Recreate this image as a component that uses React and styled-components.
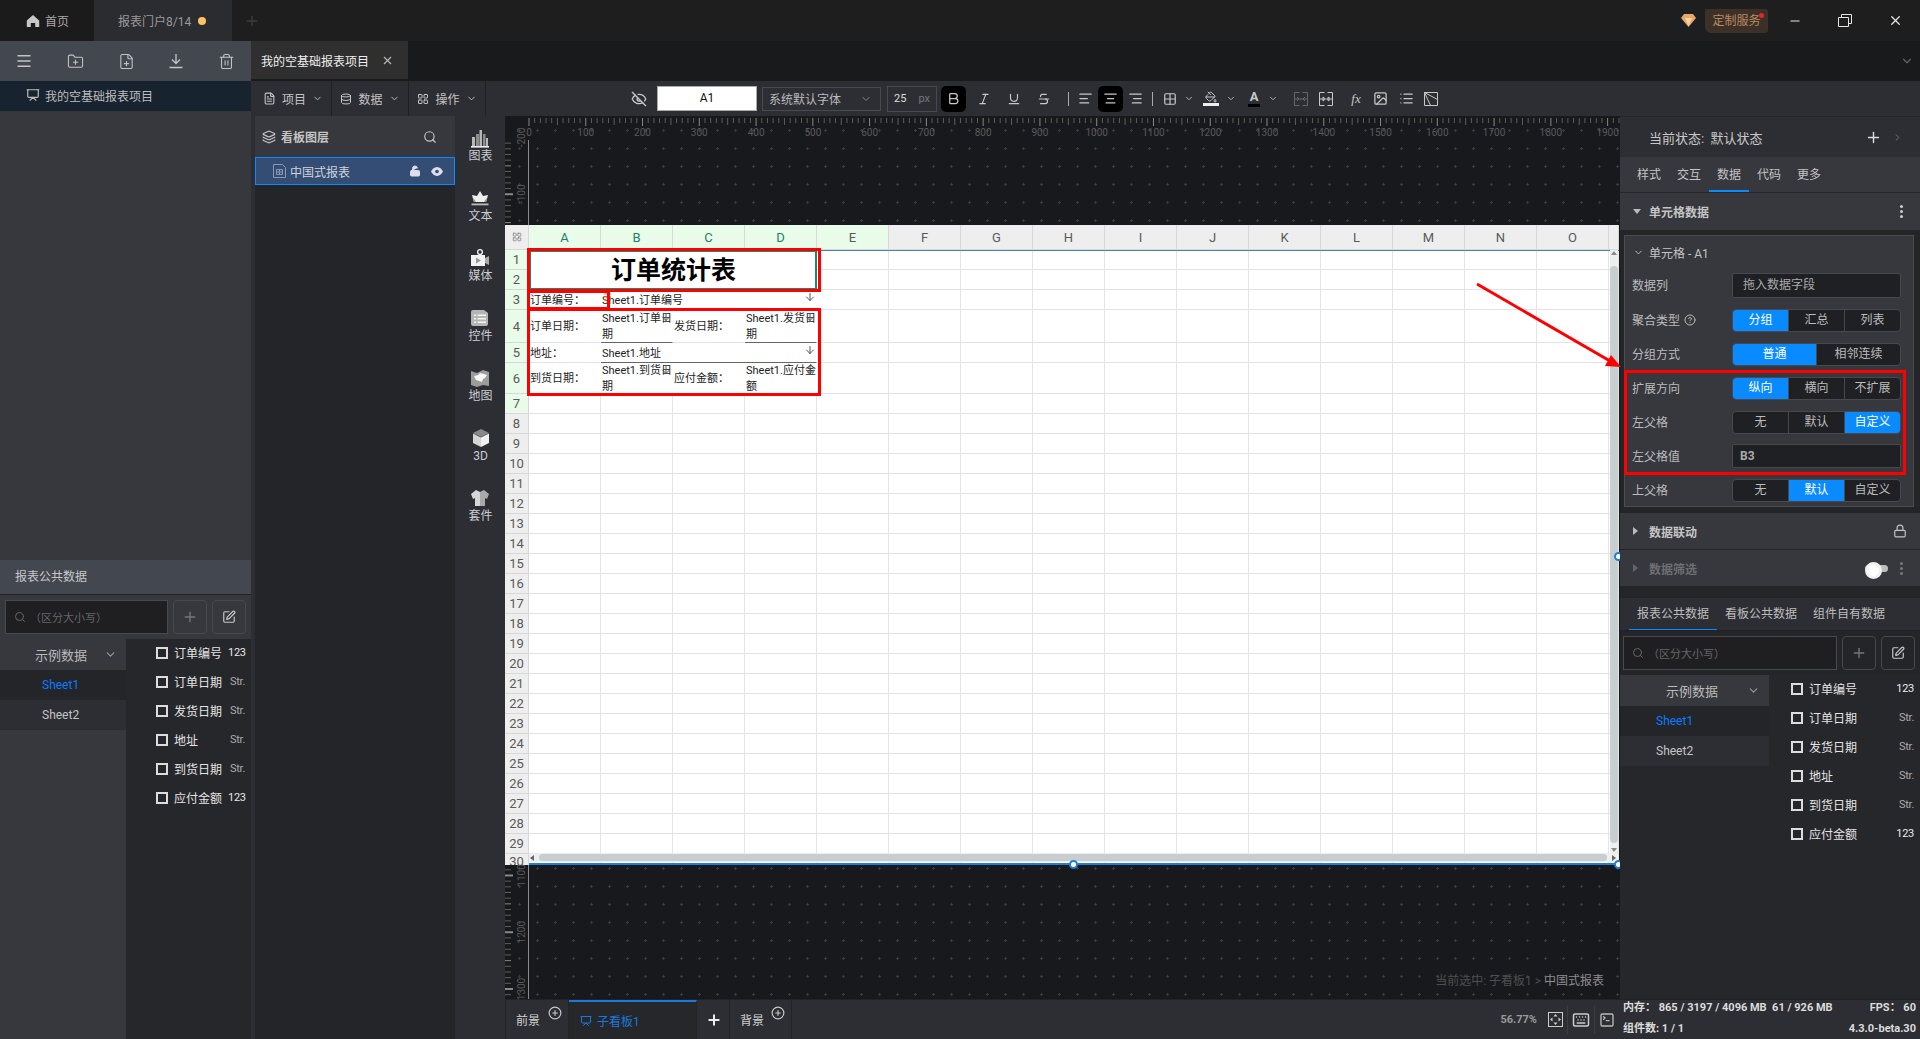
import React from 'react';
import styled, { createGlobalStyle } from 'styled-components';
import {
  Menu, FolderPlus, FilePlus, Trash2, Presentation, FileText, Database, LayoutGrid, ChevronDown,
  ChevronRight, EyeOff, Bold, Italic, Underline, Strikethrough, AlignLeft, AlignCenter, AlignRight,
  Grid2x2, PaintBucket, Search, Plus, SquarePen, X, Layers, LockOpen, Lock, CircleHelp, Minus,
  Keyboard, SquareTerminal, CirclePlus, ArrowDown, List, Image,
} from 'lucide-react';

const FONT = 'Roboto, "Noto Sans CJK SC", sans-serif';
const BLUE = '#0a8aff';

const Global = createGlobalStyle`
  html, body { margin: 0; padding: 0; background: #1e1e1e; overflow: hidden; }
  * { box-sizing: border-box; }
  body { font-family: ${FONT}; font-size: 12px; color: #c8c8c8; }
`;

const Page = styled.div`
  position: relative;
  width: 1920px;
  height: 1039px;
  display: flex;
  flex-direction: column;
  overflow: hidden;
`;

/* title bar */
const TitleBar = styled.div`
  height: 41px;
  flex: none;
  display: flex;
  align-items: stretch;
  background: #1e1e1e;
`;
const HomeTab = styled.div`
  width: 94px;
  display: flex;
  align-items: center;
  gap: 5px;
  padding-left: 26px;
  background: #1b1b1b;
  color: #a8a8a8;
`;
const PortalTab = styled.div`
  width: 138px;
  display: flex;
  align-items: center;
  padding-left: 24px;
  gap: 7px;
  background: #2b2c30;
  color: #9a9a9a;
`;
const Dot = styled.i`
  width: 8px;
  height: 8px;
  border-radius: 50%;
  background: #ffc261;
`;
const AddTab = styled.div`
  width: 40px;
  display: flex;
  align-items: center;
  justify-content: center;
  color: #3d3d3d;
`;
const TitleRight = styled.div`
  margin-left: auto;
  display: flex;
  align-items: center;
`;
const Gem = styled.div`
  width: 33px;
  height: 24px;
  display: flex;
  align-items: center;
  justify-content: center;
  background: #1c1e22;
`;
const Service = styled.div`
  position: relative;
  width: 63px;
  height: 24px;
  margin-right: 2px;
  line-height: 24px;
  text-align: center;
  background: #3d3027;
  border-radius: 0 3px 3px 6px;
  color: #b98a63;
  &::after {
    content: '';
    position: absolute;
    right: 4px;
    top: 4px;
    width: 5px;
    height: 5px;
    border-radius: 50%;
    background: #e0262e;
  }
`;
const WinBtn = styled.div`
  width: 50px;
  display: flex;
  align-items: center;
  justify-content: center;
  color: #e6e6e6;
`;
const RestoreIcon = styled.svg`
  width: 14px;
  height: 13px;
`;

const Body = styled.div`
  flex: 1;
  display: flex;
  min-height: 0;
`;

/* left sidebar */
const Sidebar = styled.aside`
  width: 251px;
  flex: none;
  display: flex;
  flex-direction: column;
  background: #36383d;
`;
const SideHead = styled.div`
  height: 40px;
  flex: none;
  display: flex;
  align-items: center;
  justify-content: space-between;
  padding: 0 16px 0 15px;
  background: #434750;
  color: #c4c4c4;
`;
const ProjectRow = styled.div`
  height: 30px;
  flex: none;
  display: flex;
  align-items: center;
  gap: 5px;
  padding: 0 0 2px 26px;
  background: #17232f;
  color: #bdbdbd;
`;
const SideSpace = styled.div`
  height: 449px;
  flex: none;
`;
const SideTitle = styled.div`
  height: 35px;
  flex: none;
  line-height: 35px;
  padding-left: 15px;
  background: #434750;
  color: #c8c8c8;
  border-bottom: 1px solid #222;
`;

/* data browser, both the left and the right panel use it */
const SearchRow = styled.div`
  height: 44px;
  flex: none;
  display: flex;
  gap: 5px;
  padding: 5px 5px 5px ${p => p.$pad}px;
`;
const SearchBox = styled.div`
  flex: 1;
  display: flex;
  align-items: center;
  gap: 4px;
  padding-left: 8px;
  background: #1f1f21;
  border: 1px solid #4a4a4a;
  font-size: 11px;
  color: #666;
`;
const SquareBtn = styled.div`
  width: 34px;
  display: flex;
  align-items: center;
  justify-content: center;
  border: 1px solid #47494e;
  border-radius: 4px;
  color: ${p => (p.$bright ? '#c8c8c8' : '#777')};
`;
const Browser = styled.div`
  flex: 1;
  display: flex;
  min-height: 0;
`;
const SheetCol = styled.div`
  width: ${p => p.$w}px;
  flex: none;
  background: ${p => p.$bg};
`;
const GroupRow = styled.div`
  height: 31px;
  display: flex;
  align-items: center;
  justify-content: space-between;
  padding: 0 9px 0 ${p => p.$pad}px;
  background: #36383d;
  font-size: 13px;
  color: #bbb;
`;
const SheetRow = styled.div`
  height: 30px;
  line-height: 30px;
  padding-left: ${p => p.$pad}px;
  background: ${p => (p.$active ? '#242528' : '#2d2e33')};
  color: ${p => (p.$active ? '#0a7cff' : '#c4c4c4')};
`;
const FieldCol = styled.div`
  flex: 1;
  min-width: 0;
  padding: 0 6px 0 ${p => p.$pad}px;
  background: #26272a;
`;
const FieldRow = styled.div`
  height: 29px;
  display: flex;
  align-items: center;
  gap: 6px;
  white-space: nowrap;
  color: #e4e4e4;
  &:first-child { margin-top: -1px; }
`;
const CheckBox = styled.i`
  width: 12px;
  height: 12px;
  flex: none;
  border: 2px solid #dcdcdc;
`;
const FieldType = styled.span`
  margin-left: auto;
  font-size: 11px;
  letter-spacing: -0.3px;
  color: ${p => (p.$num ? '#e8e8e8' : '#aaa')};
`;

const FIELDS = [
  ['订单编号', '123'], ['订单日期', 'Str.'], ['发货日期', 'Str.'],
  ['地址', 'Str.'], ['到货日期', 'Str.'], ['应付金额', '123'],
];

function DataBrowser({ pad, colW, groupPad, sheetPad, fieldPad }) {
  return (
    <>
      <SearchRow $pad={pad}>
        <SearchBox><Search size={12} />（区分大小写）</SearchBox>
        <SquareBtn><Plus size={16} /></SquareBtn>
        <SquareBtn $bright><SquarePen size={14} /></SquareBtn>
      </SearchRow>
      <Browser>
        <SheetCol $w={colW} $bg={colW === 126 ? '#36383d' : '#26272a'}>
          <GroupRow $pad={groupPad}>示例数据<ChevronDown size={13} color="#999" /></GroupRow>
          <SheetRow $active $pad={sheetPad}>Sheet1</SheetRow>
          <SheetRow $pad={sheetPad}>Sheet2</SheetRow>
        </SheetCol>
        <FieldCol $pad={fieldPad}>
          {FIELDS.map(([name, type]) => (
            <FieldRow key={name}>
              <CheckBox />
              {name}
              <FieldType $num={type === '123'}>{type}</FieldType>
            </FieldRow>
          ))}
        </FieldCol>
      </Browser>
    </>
  );
}

/* workspace */
const Workspace = styled.div`
  flex: 1;
  display: flex;
  flex-direction: column;
  min-width: 0;
`;
const DocTabs = styled.div`
  height: 40px;
  flex: none;
  display: flex;
  align-items: flex-start;
  justify-content: space-between;
  background: #191a1b;
  padding-right: 6px;
`;
const DocTab = styled.div`
  width: 157px;
  height: 38px;
  display: flex;
  align-items: center;
  gap: 12px;
  padding-left: 10px;
  background: #2f2f2f;
  color: #eee;
`;
const DocChevron = styled.div`
  height: 40px;
  display: flex;
  align-items: center;
  color: #666;
`;
const Toolbar = styled.div`
  height: 35px;
  flex: none;
  display: flex;
  align-items: center;
  padding-left: 4px;
  background: #2d2e33;
  color: #c4c4c4;
`;
const MenuBtn = styled.div`
  width: 77px;
  height: 35px;
  display: flex;
  align-items: center;
  justify-content: center;
  gap: 6px;
  border-right: 1px solid #1f2023;
`;
const TBtn = styled.div`
  width: ${p => p.$w || 20}px;
  height: 26px;
  flex: none;
  margin-left: ${p => p.$ml || 0}px;
  display: flex;
  align-items: center;
  justify-content: center;
  border-radius: 5px;
  background: ${p => (p.$on ? '#000' : 'transparent')};
  color: ${p => (p.$dim ? '#666' : '#c8c8c8')};
`;
const CellRef = styled.div`
  width: 100px;
  height: 25px;
  flex: none;
  margin-left: 9px;
  line-height: 23px;
  text-align: center;
  background: #fff;
  border: 1px solid #aaa;
  color: #111;
`;
const FontSelect = styled.div`
  width: 119px;
  height: 24px;
  flex: none;
  margin-left: 5px;
  display: flex;
  align-items: center;
  justify-content: space-between;
  padding: 0 8px 0 6px;
  border: 1px solid #484a4f;
  color: #bbb;
`;
const SizeBox = styled.div`
  width: 50px;
  height: 26px;
  flex: none;
  margin-left: 6px;
  display: flex;
  align-items: center;
  justify-content: space-between;
  padding: 0 6px;
  border: 1px solid #484a4f;
  font-size: 11px;
  color: #ddd;
  span:last-child { color: #777; }
`;
const ToolSep = styled.i`
  width: 1px;
  height: 14px;
  flex: none;
  margin-left: ${p => p.$ml}px;
  background: #aaa;
`;
const ColorBar = styled.span`
  display: flex;
  justify-content: center;
  font-size: 13px;
  font-weight: 700;
  line-height: 14px;
  border-bottom: 3px solid ${p => p.$c};
  padding: 0 2px;
`;
const Fx = styled.span`
  font-family: "Liberation Serif", serif;
  font-style: italic;
  font-size: 13px;
`;

const Main = styled.div`
  flex: 1;
  display: flex;
  min-height: 0;
`;

/* layers */
const LayerWrap = styled.div`
  width: 205px;
  flex: none;
  padding: 0 1px 0 4px;
  background: #2d2e33;
`;
const LayerPanel = styled.div`
  height: 100%;
  background: #242528;
`;
const LayerHead = styled.div`
  height: 41px;
  display: flex;
  align-items: center;
  gap: 5px;
  padding: 0 18px 0 7px;
  background: #36383d;
  font-weight: 700;
  color: #c4c4c4;
  svg:last-child { margin-left: auto; }
`;
const LayerItem = styled.div`
  height: 28px;
  display: flex;
  align-items: center;
  gap: 4px;
  padding: 0 11px 0 17px;
  background: #334d74;
  border: 1px solid ${BLUE};
  color: #d0d4da;
`;
const LayerTools = styled.div`
  margin-left: auto;
  display: flex;
  align-items: center;
  gap: 10px;
  color: #dde;
`;

/* component rail */
const Rail = styled.nav`
  width: 49px;
  flex: none;
  display: flex;
  flex-direction: column;
  align-items: center;
  padding-top: 12px;
  background: #2d2e33;
`;
const RailItem = styled.div`
  height: 60px;
  display: flex;
  flex-direction: column;
  align-items: center;
  color: #c9ccd2;
  line-height: 14px;
  svg { display: block; margin-bottom: 1px; }
`;

const railIcons = {
  chart: (
    <svg width="20" height="20" viewBox="0 0 20 20" fill="#b8b8b8">
      <rect x="2" y="9" width="3" height="9" /><rect x="6" y="6" width="3" height="12" fill="#8d8d8d" />
      <rect x="9.5" y="2" width="2.5" height="16" /><rect x="13" y="6" width="2.5" height="12" fill="#8d8d8d" />
      <rect x="16" y="10" width="2" height="8" /><rect x="1" y="18" width="18" height="1.6" fill="#eee" />
    </svg>
  ),
  crown: (
    <svg width="20" height="20" viewBox="0 0 20 20">
      <path d="M10 3l3 5 5-1-2 7H4L2 7l5 1z" fill="#eee" />
      <path d="M2 8l2 6h2zM18 8l-2 6h-2z" fill="#999" />
      <rect x="1.5" y="15.5" width="17" height="1.8" fill="#bbb" />
    </svg>
  ),
  media: (
    <svg width="20" height="20" viewBox="0 0 20 20">
      <circle cx="10" cy="4" r="2.4" fill="none" stroke="#eee" strokeWidth="1.4" />
      <path d="M1 7h14v11H1z" fill="#f2f2f2" />
      <path d="M15 10l4-2v9l-4-2z" fill="#aaa" /><path d="M6 9.5l5 3-5 3z" fill="#999" />
    </svg>
  ),
  control: (
    <svg width="20" height="20" viewBox="0 0 20 20">
      <path d="M3 2h11l4 3v11a2 2 0 0 1-2 2H3a2 2 0 0 1-2-2V4a2 2 0 0 1 2-2z" fill="#b5b5b5" />
      <path d="M4 6.5h2v1.6H4zM7.5 6.5H16v1.6H7.5zM4 10h2v1.6H4zM7.5 10H16v1.6H7.5zM4 13.5h2v1.6H4zM7.5 13.5H16v1.6H7.5z" fill="#f4f4f4" />
    </svg>
  ),
  map: (
    <svg width="20" height="20" viewBox="0 0 20 20">
      <path d="M1 3l6 2 6-3 6 2v14l-6-1-6 2-6-2z" fill="#9c9c9c" />
      <path d="M4 8l4-1 2-2 4 1 3 1-2 3-2 1-1 3-3-1-3-1z" fill="#f6f6f6" />
    </svg>
  ),
  cube: (
    <svg width="20" height="20" viewBox="0 0 20 20">
      <path d="M10 1l8 4-8 4-8-4z" fill="#888" /><path d="M2 5.5l8 4V19l-8-4z" fill="#d5d5d5" />
      <path d="M18 5.5l-8 4V19l8-4z" fill="#f0f0f0" />
    </svg>
  ),
  suit: (
    <svg width="20" height="20" viewBox="0 0 20 20">
      <path d="M6 2L1 6l2 5 2-1v8h5V4z" fill="#d5d5d5" /><path d="M14 2l5 4-2 5-2-1v8h-5V4z" fill="#a9a9a9" />
    </svg>
  ),
};
const RAIL = [['chart', '图表'], ['crown', '文本'], ['media', '媒体'], ['control', '控件'], ['map', '地图'], ['cube', '3D'], ['suit', '套件']];

/* canvas */
const Canvas = styled.section`
  width: 1115px;
  flex: none;
  display: flex;
  flex-direction: column;
  background-color: #18191c;
  background-image: radial-gradient(circle at 14.5px 14.5px, #3a3b3f 1px, transparent 1.2px);
  background-size: 18px 18px;
`;
const Ruler = styled.svg`
  display: block;
  flex: none;
  overflow: visible;
  font-family: Roboto, sans-serif;
  font-size: 10px;
  fill: #5a5a5a;
`;
const GutterRow = styled.div`
  position: relative;
  height: ${p => p.$h}px;
  flex: none;
  display: flex;
`;
const GutterLine = styled.i`
  width: 1px;
  background: #8a8a8a;
`;
const Selected = styled.div`
  position: absolute;
  right: 16px;
  bottom: 11px;
  color: #4e4e4e;
  b { font-weight: 400; color: #8c8c8c; }
`;

const STEP = 5.677;
function TopRuler() {
  const ticks = [];
  for (let i = 0; i <= 192; i++) {
    const x = 24 + i * STEP;
    const h = i % 10 === 0 ? 8 : i % 5 === 0 ? 7 : 5;
    ticks.push(<line key={i} x1={x} x2={x} y1={2} y2={2 + h} stroke={i % 10 === 0 ? '#888' : '#5e5e5e'} />);
    if (i % 10 === 0) {
      ticks.push(<text key={'t' + i} x={x} y={20} textAnchor="middle">{i * 10}</text>);
    }
  }
  return <Ruler width="1115" height="24">{ticks}</Ruler>;
}
function SideRuler({ height, zero }) {
  const ticks = [];
  for (let v = -300; v <= 1600; v += 10) {
    const y = zero + v * 0.5677;
    if (y < -5 || y > height) continue;
    const major = v % 100 === 0;
    const mid = v % 50 === 0;
    if (y >= 0) {
      ticks.push(<line key={v} y1={y} y2={y} x1={0} x2={major ? 8 : 6} stroke={major || mid ? '#888' : '#5e5e5e'} strokeWidth={major ? 2 : 1} />);
    }
    if (major) {
      ticks.push(<text key={'t' + v} transform={`translate(20 ${y}) rotate(-90)`} textAnchor="middle">{v}</text>);
    }
  }
  return <Ruler width="23" height={height}>{ticks}</Ruler>;
}

/* sheet */
const Sheet = styled.div`
  position: relative;
  height: 640px;
  flex: none;
  width: 1114px;
  font-family: ${FONT};
`;
const SheetClip = styled.div`
  position: relative;
  height: 100%;
  overflow: hidden;
  background: #fff;
`;
const SheetGrid = styled.div`
  display: grid;
  grid-template-columns: 24px repeat(15, 72px) 10px;
  grid-template-rows: 25px 20px 20px 20px 33px 20px 31px repeat(23, 20px);
`;
const HeadCell = styled.div`
  display: flex;
  align-items: center;
  justify-content: center;
  background: ${p => (p.$on ? '#e9fbe9' : '#eee')};
  border-right: 1px solid #d8d8d8;
  border-bottom: 1px solid #d8d8d8;
  color: ${p => (p.$green ? '#1c7f6c' : '#5a5a5a')};
  font-size: 13px;
  overflow: hidden;
`;
const Corner = styled(HeadCell)`
  background: #eee;
`;
const Cell = styled.div`
  position: relative;
  grid-column: span ${p => p.$cs || 1};
  grid-row: span ${p => p.$rs || 1};
  display: flex;
  align-items: center;
  padding: 2px 0 0 1px;
  white-space: nowrap;
  line-height: 16px;
  font-size: 11px;
  color: #222;
  background: #fff;
  border-right: 1px solid ${p => (p.$plain ? '#e4e4e4' : 'transparent')};
  border-bottom: 1px solid ${p => (p.$bound ? '#666' : '#e4e4e4')};
`;
const TitleCell = styled(Cell)`
  justify-content: center;
  font-size: 25px;
  font-weight: 700;
  color: #000;
  border: 2px solid #1a8a6a;
`;
const BindArrow = styled(ArrowDown)`
  position: absolute;
  right: 0;
  top: 1px;
  color: #555;
`;
const OrangeMark = styled.svg`
  position: absolute;
  left: 3px;
  top: 3px;
`;
const VBar = styled.div`
  position: absolute;
  right: 1px;
  top: 25px;
  bottom: 12px;
  width: 8px;
  display: flex;
  flex-direction: column;
  align-items: center;
  background: #eceef0;
`;
const VThumb = styled.div`
  flex: 1;
  width: 100%;
  margin: 10px 0 4px;
  border-radius: 4px;
  background: #c8cdd0;
`;
const HBar = styled.div`
  position: absolute;
  left: 24px;
  right: 2px;
  bottom: 3px;
  height: 9px;
  display: flex;
  align-items: center;
  background: #eceef0;
`;
const HThumb = styled.div`
  flex: 1;
  height: 7px;
  margin: 0 4px;
  border-radius: 4px;
  background: #c8cdd0;
`;
const TopEdge = styled.div`
  position: absolute;
  left: 312px;
  right: 0;
  top: 25px;
  height: 1px;
  background: #4a80b8;
`;
const BottomEdge = styled.div`
  position: absolute;
  left: 24px;
  right: 0;
  bottom: 0;
  height: 2px;
  background: #1f7fd0;
`;
const Handle = styled.i`
  position: absolute;
  width: 9px;
  height: 9px;
  border-radius: 50%;
  background: #fff;
  border: 2px solid #1f7fd0;
  z-index: 1;
  left: ${p => p.$x}px;
  top: ${p => p.$y}px;
`;
const RedBox = styled.div`
  position: absolute;
  left: ${p => p.$x}px;
  top: ${p => p.$y}px;
  width: ${p => p.$w}px;
  height: ${p => p.$h}px;
  border: 3px solid #f00;
  z-index: 6;
  pointer-events: none;
`;
const AnnotationArrow = styled.svg`
  position: absolute;
  left: 1470px;
  top: 278px;
  z-index: 6;
`;

const COLS = 'ABCDEFGHIJKLMNO'.split('');
const two = (a, b) => <span>{a}<br />{b}</span>;
const SHEET_CELLS = {
  '3A': { text: '订单编号：' },
  '3B': { text: 'Sheet1.订单编号', cs: 3, arrow: true, mark: true },
  '4A': { text: '订单日期：' },
  '4B': { text: two('Sheet1.订单日', '期'), arrow: true, bound: true },
  '4C': { text: '发货日期：' },
  '4D': { text: two('Sheet1.发货日', '期'), arrow: true, bound: true },
  '5A': { text: '地址：' },
  '5B': { text: 'Sheet1.地址', cs: 3, arrow: true, bound: true },
  '6A': { text: '到货日期：' },
  '6B': { text: two('Sheet1.到货日', '期'), arrow: true },
  '6C': { text: '应付金额：' },
  '6D': { text: two('Sheet1.应付金', '额'), arrow: true },
};
const COVERED = new Set(['2A', '2B', '2C', '2D', '3C', '3D', '5C', '5D']);

function SheetCells() {
  const out = [<Corner key="corner"><LayoutGrid size={10} color="#888" /></Corner>];
  COLS.forEach((c, i) => out.push(<HeadCell key={c} $on={i < 5} $green={i < 4}>{c}</HeadCell>));
  out.push(<HeadCell key="P" />);
  for (let r = 1; r <= 30; r++) {
    out.push(<HeadCell key={'r' + r} $on={r <= 7}>{r}</HeadCell>);
    COLS.forEach(c => {
      const id = r + c;
      if (COVERED.has(id)) return;
      if (id === '1A') {
        out.push(<TitleCell key={id} $cs={4} $rs={2}>订单统计表</TitleCell>);
        return;
      }
      if (id === '1B' || id === '1C' || id === '1D') return;
      const d = SHEET_CELLS[id];
      if (!d) {
        out.push(<Cell key={id} $plain />);
        return;
      }
      out.push(
        <Cell key={id} $cs={d.cs} $bound={d.bound}>
          {d.text}
          {d.arrow && <BindArrow size={12} />}
          {d.mark && (
            <OrangeMark width="8" height="8" stroke="#e89a2c"><path d="M0 1h7M0 4h5M0 7h7" /></OrangeMark>
          )}
        </Cell>
      );
    });
    out.push(<Cell key={'p' + r} $plain />);
  }
  return out;
}

/* bottom bar */
const BottomBar = styled.div`
  height: 40px;
  flex: none;
  display: flex;
  background: #2d2e33;
  border-top: 1px solid #222;
`;
const SceneTab = styled.div`
  position: relative;
  width: ${p => p.$w}px;
  flex: none;
  display: flex;
  align-items: center;
  padding-left: ${p => p.$pad}px;
  gap: 5px;
  border-right: 1px solid #232428;
  border-left: ${p => (p.$first ? '1px solid #232428' : 'none')};
  border-top: ${p => (p.$on ? '2px solid #1a78d8' : 'none')};
  background: ${p => (p.$on ? '#26272b' : 'transparent')};
  color: ${p => (p.$on ? '#1a78d8' : '#d0d0d0')};
`;
const AddScene = styled(CirclePlus)`
  position: absolute;
  right: 6px;
  top: 6px;
  color: #c8c8c8;
`;
const Zoom = styled.div`
  margin-left: auto;
  display: flex;
  align-items: center;
  gap: 4px;
  padding-right: 5px;
  font-size: 11px;
  font-weight: 700;
  color: #999;
`;
const ZoomSep = styled.i`
  width: 1px;
  height: 28px;
  background: #3c3d42;
`;
const FitIcon = styled.svg`
  margin-left: 7px;
`;

/* right panel */
const RightPanel = styled.aside`
  position: relative;
  z-index: 2;
  width: 300px;
  flex: none;
  display: flex;
  flex-direction: column;
  background: #242528;
`;
const StateRow = styled.div`
  height: 41px;
  flex: none;
  display: flex;
  align-items: center;
  padding: 0 17px 0 29px;
  background: #2d2e33;
  border-top: 1px solid #242528;
  font-size: 13px;
  svg:first-of-type { margin-left: auto; margin-right: 10px; color: #ddd; }
`;
const TabRow = styled.div`
  height: 36px;
  flex: none;
  display: flex;
  padding-left: 9px;
  background: #36383d;
  border-bottom: 1px solid #26272a;
`;
const PanelTab = styled.div`
  width: 40px;
  line-height: 37px;
  text-align: center;
  color: #c4c4c4;
  border-bottom: ${p => (p.$on ? `2px solid ${BLUE}` : 'none')};
`;
const SectionHead = styled.div`
  height: ${p => p.$h || 36}px;
  flex: none;
  margin-top: ${p => p.$mt || 0}px;
  display: flex;
  align-items: center;
  gap: 8px;
  padding: 0 13px 0 13px;
  background: #36383d;
  font-weight: 700;
  color: ${p => (p.$dim ? '#6e6f73' : '#c4c4c4')};
`;
const Caret = styled.i`
  width: 0;
  height: 0;
  ${p => (p.$open
    ? 'border-left: 4px solid transparent; border-right: 4px solid transparent; border-top: 5px solid #bbb;'
    : `margin-right: 3px; border-top: 4px solid transparent; border-bottom: 4px solid transparent; border-left: 5px solid ${p.$dim ? '#666' : '#bbb'};`)}
`;
const Dots = styled.span`
  margin-left: auto;
  margin-right: 4px;
  width: 3px;
  height: 3px;
  border-radius: 50%;
  background: ${p => (p.$dim ? '#777' : '#ccc')};
  box-shadow: 0 -5px 0 ${p => (p.$dim ? '#777' : '#ccc')}, 0 5px 0 ${p => (p.$dim ? '#777' : '#ccc')};
`;
const SectionRight = styled.span`
  margin-left: auto;
  display: flex;
  align-items: center;
  gap: 12px;
`;
const Toggle = styled.span`
  position: relative;
  width: 23px;
  height: 7px;
  border-radius: 4px;
  background: #bdbdbd;
  &::before {
    content: '';
    position: absolute;
    left: 0;
    top: -3px;
    width: 11px;
    height: 11px;
    border-radius: 50%;
    background: #fff;
    border: 3px solid #f2f2f2;
  }
`;
const FormBox = styled.div`
  height: 272px;
  flex: none;
  margin: 5px 6px 6px 4px;
  padding: 0 12px 0 7px;
  background: #36383d;
  border: 1px solid #4a4c50;
`;
const FormTitle = styled.div`
  height: 37px;
  display: flex;
  align-items: center;
  gap: 5px;
  margin-left: 1px;
  padding-bottom: 5px;
  color: #c4c4c4;
`;
const FormRows = styled.div`
  display: flex;
  flex-direction: column;
  gap: 11px;
`;
const FormRow = styled.div`
  display: flex;
  align-items: center;
  margin-top: ${p => p.$mt || 0}px;
`;
const FormLabel = styled.div`
  width: 100px;
  flex: none;
  display: flex;
  align-items: center;
  gap: 4px;
  margin-top: -2px;
  color: #bbb;
`;
const TextField = styled.div`
  flex: 1;
  height: ${p => p.$h}px;
  line-height: ${p => p.$h - 2}px;
  padding-left: ${p => p.$pad}px;
  background: #1f2023;
  border: 1px solid #47494e;
  border-radius: 2px;
  font-weight: ${p => (p.$bold ? 700 : 400)};
  color: #aaa;
`;
const Segments = styled.div`
  flex: 1;
  height: 23px;
  display: flex;
  background: #1f2023;
  border: 1px solid #47494e;
  border-radius: 4px;
  overflow: hidden;
`;
const Segment = styled.div`
  flex: 1;
  line-height: 21px;
  text-align: center;
  color: ${p => (p.$on ? '#fff' : '#bbb')};
  background: ${p => (p.$on ? BLUE : 'transparent')};
  & + & { border-left: 1px solid ${p => (p.$on ? BLUE : '#47494e')}; }
`;
const DataTabs = styled.div`
  height: 34px;
  flex: none;
  display: flex;
  margin-top: 11px;
  padding-left: 9px;
  background: #2d2e33;
  border-top: 1px solid #232427;
  border-bottom: 1px solid #1f2023;
`;
const DataTab = styled.div`
  width: 88px;
  line-height: 32px;
  text-align: center;
  color: #bdbdbd;
  border-bottom: ${p => (p.$on ? `1px solid ${BLUE}` : 'none')};
`;
const StatusPanel = styled.div`
  height: 40px;
  flex: none;
  display: flex;
  flex-direction: column;
  justify-content: center;
  gap: 5px;
  padding: 0 4px 2px 3px;
  background: #2d2e33;
  border-top: 1px solid #222;
  font-size: 11px;
  font-weight: 700;
  line-height: 16px;
  color: #dcdcdc;
`;
const StatusLine = styled.div`
  display: flex;
  justify-content: space-between;
`;

function SegGroup({ items, on }) {
  return (
    <Segments>
      {items.map(t => <Segment key={t} $on={t === on}>{t}</Segment>)}
    </Segments>
  );
}

export default function App() {
  return (
    <Page>
      <Global />
      <TitleBar>
        <HomeTab>
          <svg width="14" height="14" viewBox="0 0 14 14" fill="#c8c8c8"><path d="M7 1L0.8 6.5V13h4V9h4.4v4h4V6.5z" /></svg>
          首页
        </HomeTab>
        <PortalTab>报表门户8/14<Dot /></PortalTab>
        <AddTab><Plus size={16} /></AddTab>
        <TitleRight>
          <Gem>
            <svg width="15" height="13" viewBox="0 0 15 13"><path d="M3 0h9l3 4-7.5 9L0 4z" fill="#e8a765" /><path d="M4 4h7l-3.500 8z" fill="#f7d2a4" /></svg>
          </Gem>
          <Service>定制服务</Service>
          <WinBtn><Minus size={14} /></WinBtn>
          <WinBtn>
            <RestoreIcon viewBox="0 0 14 13" fill="none" stroke="#e6e6e6"><path d="M.5 3.5h10v9H.5zM3.500 3V.5h10v9H11" /></RestoreIcon>
          </WinBtn>
          <WinBtn><X size={15} /></WinBtn>
        </TitleRight>
      </TitleBar>

      <Body>
        <Sidebar>
          <SideHead>
            <Menu size={18} />
            <FolderPlus size={17} strokeWidth={1.5} />
            <FilePlus size={17} strokeWidth={1.5} />
            <svg width="16" height="16" viewBox="0 0 16 16" fill="none" stroke="currentColor" strokeWidth="1.3"><path d="M8 1v9M4 6.500l4 4 4-4M1.500 14.500h13" /></svg>
            <Trash2 size={17} strokeWidth={1.5} />
          </SideHead>
          <ProjectRow><Presentation size={14} />我的空基础报表项目</ProjectRow>
          <SideSpace />
          <SideTitle>报表公共数据</SideTitle>
          <DataBrowser pad={5} colW={126} groupPad={35} sheetPad={42} fieldPad={30} />
        </Sidebar>

        <Workspace>
          <DocTabs>
            <DocTab>我的空基础报表项目<X size={13} color="#bbb" /></DocTab>
            <DocChevron><ChevronDown size={14} /></DocChevron>
          </DocTabs>
          <Toolbar>
            <MenuBtn><FileText size={13} />项目<ChevronDown size={11} /></MenuBtn>
            <MenuBtn><Database size={12} />数据<ChevronDown size={11} /></MenuBtn>
            <MenuBtn><LayoutGrid size={12} />操作<ChevronDown size={11} /></MenuBtn>
            <TBtn $w={18} $ml={144}><EyeOff size={16} /></TBtn>
            <CellRef>A1</CellRef>
            <FontSelect>系统默认字体<ChevronDown size={12} color="#888" /></FontSelect>
            <SizeBox><span>25</span><span>px</span></SizeBox>
            <TBtn $w={25} $ml={4} $on><Bold size={15} /></TBtn>
            <TBtn $w={25} $ml={5}><Italic size={14} /></TBtn>
            <TBtn $w={25} $ml={5}><Underline size={14} /></TBtn>
            <TBtn $w={25} $ml={5}><Strikethrough size={14} /></TBtn>
            <ToolSep $ml={12} />
            <TBtn $w={25} $ml={4}><AlignLeft size={15} /></TBtn>
            <TBtn $w={25} $on><AlignCenter size={15} /></TBtn>
            <TBtn $w={25}><AlignRight size={15} /></TBtn>
            <ToolSep $ml={4} />
            <TBtn $ml={7}><Grid2x2 size={14} /></TBtn>
            <TBtn $w={10} $ml={4}><ChevronDown size={11} /></TBtn>
            <TBtn $ml={7}><ColorBar $c="#eee"><PaintBucket size={12} /></ColorBar></TBtn>
            <TBtn $w={10} $ml={5}><ChevronDown size={11} /></TBtn>
            <TBtn $ml={8}><ColorBar $c="#000">A</ColorBar></TBtn>
            <TBtn $w={10} $ml={4}><ChevronDown size={11} /></TBtn>
            <TBtn $ml={13} $dim>
              <svg width="14" height="14" viewBox="0 0 14 14" fill="none" stroke="currentColor"><path d="M5.500.5h-5v13h5M8.500.5h5v13h-5M.5 7h13M3 5l2 2-2 2M11 5L9 7l2 2" /></svg>
            </TBtn>
            <TBtn $ml={5}>
              <svg width="14" height="14" viewBox="0 0 14 14" fill="none" stroke="currentColor"><path d="M5.500.5h-5v13h5M8.500.5h5v13h-5M.5 7h5M8.500 7h5M6.500 7L4 5v4zM7.500 7L10 5v4z" /></svg>
            </TBtn>
            <TBtn $ml={10}><Fx>fx</Fx></TBtn>
            <TBtn $ml={4}><Image size={15} /></TBtn>
            <TBtn $ml={6}><List size={15} /></TBtn>
            <TBtn $ml={5}>
              <svg width="14" height="14" viewBox="0 0 14 14" fill="none" stroke="currentColor"><path d="M.5.500h13v13H.5zM.5.500l13 7M.5.500l6 13" /></svg>
            </TBtn>
          </Toolbar>

          <Main>
            <LayerWrap>
              <LayerPanel>
                <LayerHead><Layers size={14} />看板图层<Search size={14} /></LayerHead>
                <LayerItem>
                  <svg width="13" height="14" viewBox="0 0 13 14" fill="none" stroke="#8b98ad"><path d="M.5.500h9l3 3v10H.5zM3.500 5.500h6v5h-6zM6.500 5.500v5M3.500 8h6" /></svg>
                  中国式报表
                  <LayerTools>
                    <LockOpen size={12} fill="#dde" />
                    <svg width="12" height="9" viewBox="0 0 12 9"><path d="M6 0c3 0 5 2.500 6 4.500C11 6.500 9 9 6 9S1 6.500 0 4.500C1 2.500 3 0 6 0z" fill="#dde" /><circle cx="6" cy="4.500" r="1.800" fill="#334d74" /></svg>
                  </LayerTools>
                </LayerItem>
              </LayerPanel>
            </LayerWrap>
            <Rail>
              {RAIL.map(([k, t]) => (
                <RailItem key={k}>{railIcons[k]}{t}</RailItem>
              ))}
            </Rail>
            <Canvas>
              <TopRuler />
              <GutterRow $h={85}>
                <SideRuler height={85} zero={111} />
                <GutterLine />
              </GutterRow>
              <Sheet>
                <SheetClip>
                  <SheetGrid><SheetCells /></SheetGrid>
                  <TopEdge />
                  <VBar>
                    <svg width="8" height="6"><path d="M1 5l3-4 3 4z" fill="#888" /></svg>
                    <VThumb />
                    <svg width="8" height="6"><path d="M1 1l3 4 3-4z" fill="#888" /></svg>
                  </VBar>
                  <HBar>
                    <svg width="6" height="8"><path d="M5 1L1 4l4 3z" fill="#666" /></svg>
                    <HThumb />
                    <svg width="6" height="8"><path d="M1 1l4 3-4 3z" fill="#666" /></svg>
                  </HBar>
                  <BottomEdge />
                </SheetClip>
                <Handle $x={564} $y={635} />
                <Handle $x={1109} $y={635} />
                <Handle $x={1109} $y={327} />
                <RedBox $x={22} $y={23} $w={294} $h={44} />
                <RedBox $x={22} $y={65} $w={83} $h={20} />
                <RedBox $x={22} $y={83} $w={294} $h={88} />
              </Sheet>
              <GutterRow $h={134}>
                <SideRuler height={134} zero={-614} />
                <GutterLine />
                <Selected>当前选中: 子看板1 &gt; <b>中国式报表</b></Selected>
              </GutterRow>
              <BottomBar>
                <SceneTab $w={64} $pad={10} $first>前景<AddScene size={14} /></SceneTab>
                <SceneTab $w={128} $pad={11} $on><Presentation size={12} />子看板1</SceneTab>
                <SceneTab $w={33} $pad={9}><Plus size={16} strokeWidth={3} color="#eee" /></SceneTab>
                <SceneTab $w={62} $pad={10}>背景<AddScene size={14} /></SceneTab>
                <Zoom>
                  56.77%
                  <FitIcon width="15" height="15" viewBox="0 0 15 15" fill="#ccc" stroke="none">
                    <path d="M0 0h15v15H0zM1 1v13h13V1z" />
                    <path d="M7.500 2l2 2.500h-4zM7.500 13l-2-2.500h4zM2 7.500l2.500-2v4zM13 7.500l-2.500 2v-4z" />
                  </FitIcon>
                  <ZoomSep />
                  <Keyboard size={18} color="#ccc" />
                  <ZoomSep />
                  <SquareTerminal size={16} color="#bbb" />
                </Zoom>
              </BottomBar>
            </Canvas>
            <RightPanel>
              <StateRow>当前状态:&nbsp;&nbsp;默认状态<Plus size={17} /><ChevronRight size={11} color="#777" /></StateRow>
              <TabRow>
                <PanelTab>样式</PanelTab>
                <PanelTab>交互</PanelTab>
                <PanelTab $on>数据</PanelTab>
                <PanelTab>代码</PanelTab>
                <PanelTab>更多</PanelTab>
              </TabRow>
              <SectionHead $h={37}><Caret $open />单元格数据<Dots /></SectionHead>
              <FormBox>
                <FormTitle><ChevronDown size={11} />单元格 - A1</FormTitle>
                <FormRows>
                  <FormRow><FormLabel>数据列</FormLabel><TextField $h={25} $pad={10}>拖入数据字段</TextField></FormRow>
                  <FormRow><FormLabel>聚合类型<CircleHelp size={12} /></FormLabel><SegGroup items={['分组', '汇总', '列表']} on="分组" /></FormRow>
                  <FormRow><FormLabel>分组方式</FormLabel><SegGroup items={['普通', '相邻连续']} on="普通" /></FormRow>
                  <FormRow><FormLabel>扩展方向</FormLabel><SegGroup items={['纵向', '横向', '不扩展']} on="纵向" /></FormRow>
                  <FormRow><FormLabel>左父格</FormLabel><SegGroup items={['无', '默认', '自定义']} on="自定义" /></FormRow>
                  <FormRow $mt={-1}><FormLabel>左父格值</FormLabel><TextField $h={24} $pad={7} $bold>B3</TextField></FormRow>
                  <FormRow><FormLabel>上父格</FormLabel><SegGroup items={['无', '默认', '自定义']} on="默认" /></FormRow>
                </FormRows>
              </FormBox>
              <SectionHead><Caret />数据联动<SectionRight><Lock size={14} /></SectionRight></SectionHead>
              <SectionHead $dim $mt={1}>
                <Caret $dim />数据筛选
                <SectionRight><Toggle /><Dots $dim /></SectionRight>
              </SectionHead>
              <DataTabs>
                <DataTab $on>报表公共数据</DataTab>
                <DataTab>看板公共数据</DataTab>
                <DataTab>组件自有数据</DataTab>
              </DataTabs>
              <DataBrowser pad={3} colW={149} groupPad={46} sheetPad={36} fieldPad={22} />
              <StatusPanel>
                <StatusLine><span>内存： 865 / 3197 / 4096 MB&nbsp; 61 / 926 MB</span><span>FPS： 60</span></StatusLine>
                <StatusLine><span>组件数: 1 / 1</span><span>4.3.0-beta.30</span></StatusLine>
              </StatusPanel>
            </RightPanel>
          </Main>
        </Workspace>
      </Body>

      <RedBox $x={1624} $y={370} $w={282} $h={105} />
      <AnnotationArrow width="156" height="96" viewBox="0 0 156 96">
        <path d="M7 6L140 83" stroke="#f00" strokeWidth="3" fill="none" />
        <path d="M151 89l-16-1 6-11z" fill="#f00" />
      </AnnotationArrow>
    </Page>
  );
}
